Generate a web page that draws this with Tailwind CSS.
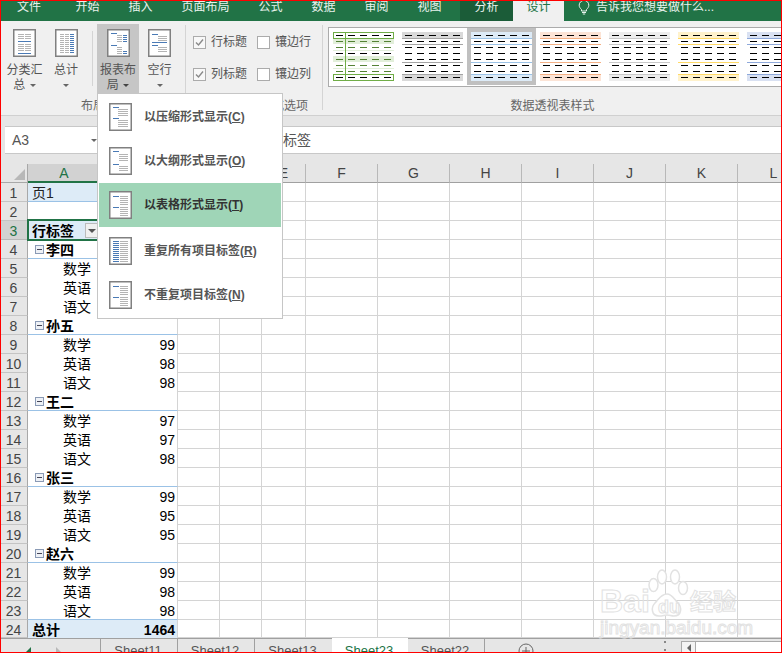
<!DOCTYPE html>
<html lang="zh-CN">
<head>
    <meta charset="UTF-8">
    <title>数据透视表 - Excel</title>
    <script src="https://cdn.jsdelivr.net/npm/@tailwindcss/browser@4"></script>
</head>
<body class="bg-white">
<div class="relative w-[782px] h-[653px] overflow-hidden bg-white text-[12px] text-[#555] [font-family:'Liberation_Sans','Noto_Sans_CJK_SC',sans-serif]">

    <!-- 标题栏 / 选项卡 -->
    <div class="flex h-[21px] bg-[#217346] text-[#e8f2ec] leading-[14px]">
        <div class="w-[56px] ml-[1px] text-center">文件</div>
        <div class="w-[53px] ml-[4px] text-center">开始</div>
        <div class="w-[53px] text-center">插入</div>
        <div class="w-[77px] text-center">页面布局</div>
        <div class="w-[53px] text-center">公式</div>
        <div class="w-[53px] text-center">数据</div>
        <div class="w-[53px] text-center">审阅</div>
        <div class="w-[53px] text-center">视图</div>
        <div class="w-[53px] ml-[4px] text-center bg-[#1b5c38]">分析</div>
        <div class="w-[51px] text-center bg-[#f0f0f0] text-[#217346]">设计</div>
        <div class="flex items-start ml-[14px]">
            <svg width="12" height="15" viewBox="0 0 12 15" fill="none" stroke="#e8f2ec"><path d="M3.5 9.5C2 8 1.2 7 1.2 5.2a4.8 4.8 0 0 1 9.6 0c0 1.8-.8 2.8-2.3 4.3v1.5h-5zM4 12.5h4M4.8 14h2.4"/></svg>
            <span class="ml-[6px]">告诉我您想要做什么...</span>
        </div>
    </div>

    <!-- 功能区 -->
    <div class="flex h-[95px] bg-[#f0f0f0] border-b border-[#d0d0d0]">
        <!-- 布局 -->
        <div class="flex flex-col w-[184px] ml-[1px] shrink-0">
            <div class="flex h-[69px] mt-[3px]">
                <div class="flex flex-col items-center w-[39px] ml-[4px] pt-[5px] leading-[15px] text-center">
                    <span data-icon="subtotal"></span>
                    <span class="mt-[6px]">分类汇</span>
                    <span>总 <i class="inline-block align-middle ml-[1px] border-x-[3px] border-t-[3px] border-x-transparent border-t-[#666]"></i></span>
                </div>
                <div class="flex flex-col items-center w-[36px] ml-[4px] pt-[5px] leading-[15px] text-center">
                    <span data-icon="total"></span>
                    <span class="mt-[6px]">总计</span>
                    <i class="mt-[6px] border-x-[3px] border-t-[3px] border-x-transparent border-t-[#666]"></i>
                </div>
                <div class="w-px h-[55px] mt-[7px] ml-[8px] bg-[#d4d4d4]"></div>
                <div class="flex flex-col items-center w-[42px] ml-[4px] pt-[5px] leading-[15px] text-center bg-[#c6c6c6]">
                    <span data-icon="layout"></span>
                    <span class="mt-[6px]">报表布</span>
                    <span>局 <i class="inline-block align-middle ml-[1px] border-x-[3px] border-t-[3px] border-x-transparent border-t-[#444]"></i></span>
                </div>
                <div class="flex flex-col items-center w-[41px] pt-[5px] leading-[15px] text-center">
                    <span data-icon="blank"></span>
                    <span class="mt-[6px]">空行</span>
                    <i class="mt-[6px] border-x-[3px] border-t-[3px] border-x-transparent border-t-[#666]"></i>
                </div>
            </div>
            <div class="mt-[5px] leading-[16px] text-center text-[#666]">布局</div>
        </div>
        <div class="w-px h-[85px] mt-[4px] bg-[#d4d4d4]"></div>

        <!-- 数据透视表样式选项 -->
        <div class="flex flex-col w-[136px] shrink-0">
            <div class="grid grid-cols-[64px_64px] content-start gap-y-[13px] h-[69px] mt-[3px] pl-[7px] pt-[9px] leading-[19px]">
                <div class="flex items-center">
                    <span class="flex items-center justify-center w-[13px] h-[13px] border border-[#ababab] bg-[#f8f8f8]">
                        <svg width="11" height="11" viewBox="0 0 11 11" fill="none" stroke="#8a8a8a" stroke-width="1.4"><path d="M2 5.5l2.5 2.5L9 2.5"/></svg>
                    </span>
                    <span class="ml-[5px] whitespace-nowrap">行标题</span>
                </div>
                <div class="flex items-center">
                    <span class="w-[13px] h-[13px] border border-[#ababab] bg-white"></span>
                    <span class="ml-[5px] whitespace-nowrap">镶边行</span>
                </div>
                <div class="flex items-center">
                    <span class="flex items-center justify-center w-[13px] h-[13px] border border-[#ababab] bg-[#f8f8f8]">
                        <svg width="11" height="11" viewBox="0 0 11 11" fill="none" stroke="#8a8a8a" stroke-width="1.4"><path d="M2 5.5l2.5 2.5L9 2.5"/></svg>
                    </span>
                    <span class="ml-[5px] whitespace-nowrap">列标题</span>
                </div>
                <div class="flex items-center">
                    <span class="w-[13px] h-[13px] border border-[#ababab] bg-white"></span>
                    <span class="ml-[5px] whitespace-nowrap">镶边列</span>
                </div>
            </div>
            <div class="mt-[5px] leading-[16px] text-center text-[#666]">数据透视表样式选项</div>
        </div>
        <div class="w-px h-[85px] mt-[4px] bg-[#d4d4d4]"></div>

        <!-- 数据透视表样式 -->
        <div class="flex flex-col flex-1 min-w-0">
            <div id="gallery" class="flex h-[60px] mt-[6px] ml-[5px] border-y border-l border-[#ababab] bg-white overflow-hidden"></div>
            <div class="mt-[11px] leading-[16px] text-center text-[#666]">数据透视表样式</div>
        </div>
    </div>

    <!-- 编辑栏 -->
    <div class="h-[38px] pt-[10px] bg-[#e6e6e6]">
        <div class="flex h-[28px] ml-[5px] border-y border-[#c8c8c8] bg-white">
            <div class="flex items-center justify-between w-[95px] pl-[7px] pr-[3px] text-[14px]">
                <span>A3</span>
                <i class="border-x-[3px] border-t-[3px] border-x-transparent border-t-[#666]"></i>
            </div>
            <div class="ml-[169px] text-[14px] leading-[26px]">行标签</div>
        </div>
    </div>
    <div class="h-[10px] bg-[#e6e6e6]"></div>

    <!-- 表格 -->
    <div id="sheet" class="relative"></div>

    <!-- 工作表标签 -->
    <div class="flex h-[15px] bg-[#e6e6e6] border-t border-[#a0a0a0] text-[13px] leading-[15px] overflow-visible">
        <div class="relative w-[101px] border-r border-[#a0a0a0]">
            <i class="absolute left-[26px] top-[8px] border-y-[5px] border-r-[5px] border-y-transparent border-r-[#217346]"></i>
            <i class="absolute left-[56px] top-[8px] border-y-[5px] border-l-[5px] border-y-transparent border-l-[#b8b8b8]"></i>
        </div>
        <div class="w-[77px] pt-[4px] pr-[2px] text-center border-r border-[#a0a0a0]">Sheet11</div>
        <div class="w-[77px] pt-[4px] pr-[2px] text-center border-r border-[#a0a0a0]">Sheet12</div>
        <div class="w-[77px] pt-[4px] pr-[2px] text-center">Sheet13</div>
        <div class="w-[76px] -mt-px pt-[5px] pr-[2px] text-center bg-white text-[#217346]">Sheet23</div>
        <div class="w-[77px] pt-[4px] pr-[2px] text-center border-r border-[#a0a0a0]">Sheet22</div>
        <svg class="ml-[33px] mt-[4px]" width="16" height="16" viewBox="0 0 16 16" fill="none" stroke="#666"><circle cx="8" cy="8" r="7"/><path d="M8 4v8M4 8h8"/></svg>
        <div class="ml-[130px] mt-[2px] w-[2px] h-[10px] border-y-[2px] border-[#888]"></div>
        <div class="ml-[15px] mt-[2px] flex items-center justify-center w-[15px] h-[14px] border border-[#aaa] bg-[#f4f4f4]">
            <i class="border-y-[4px] border-r-[4px] border-y-transparent border-r-[#666]"></i>
        </div>
        <div class="flex-1 mt-[2px] bg-white border-t border-[#aaa]"></div>
    </div>

    <!-- 报表布局下拉菜单 -->
    <div class="absolute left-[97px] top-[93px] w-[186px] h-[226px] pt-px px-px bg-white border border-[#c6c6c6] font-bold">
        <div class="flex items-center h-[44px] pl-[10px]">
            <span data-icon="compact"></span>
            <span class="ml-[12px]">以压缩形式显示(<u>C</u>)</span>
        </div>
        <div class="flex items-center h-[44px] pl-[10px]">
            <span data-icon="outline"></span>
            <span class="ml-[12px]">以大纲形式显示(<u>O</u>)</span>
        </div>
        <div class="flex items-center h-[44px] pl-[10px] bg-[#9fd5b7] text-[#333]">
            <span data-icon="tabular"></span>
            <span class="ml-[12px]">以表格形式显示(<u>T</u>)</span>
        </div>
        <div class="flex items-center h-[44px] mt-[2px] pl-[10px]">
            <span data-icon="repeat"></span>
            <span class="ml-[12px]">重复所有项目标签(<u>R</u>)</span>
        </div>
        <div class="flex items-center h-[44px] pl-[10px]">
            <span data-icon="norepeat"></span>
            <span class="ml-[12px]">不重复项目标签(<u>N</u>)</span>
        </div>
    </div>

    <!-- 水印 -->
    <div class="absolute left-[598px] top-[568px] w-[145px] h-[70px] text-transparent [-webkit-text-stroke:1px_#e2e2e2]">
        <svg class="absolute left-[50px] top-0" width="42" height="52" viewBox="0 0 42 52" fill="white" stroke="#e2e2e2" stroke-width="1.5">
            <ellipse cx="5.5" cy="17" rx="4.5" ry="6.5"/><ellipse cx="14" cy="9" rx="4.5" ry="7"/><ellipse cx="27" cy="9" rx="4.5" ry="7"/><ellipse cx="35" cy="20" rx="4.5" ry="6.5"/>
            <path d="M19 26c5 0 7 5 11 9 4 4 4 13-4 13-3 0-4-1-7-1s-4 1-8 1c-8 0-8-9-4-13 4-4 6-9 12-9z"/>
        </svg>
        <span class="absolute left-[2px] top-[15px] text-[32px] leading-[36px] font-bold">Bai</span>
        <span class="absolute left-[60px] top-[29px] text-[18px] leading-[20px] font-bold">du</span>
        <span class="absolute left-[92px] top-[20px] text-[23px] leading-[28px] font-bold whitespace-nowrap">经验</span>
        <span class="absolute left-[2px] top-[50px] text-[19px] leading-[20px] whitespace-nowrap">jingyan.baidu.com</span>
    </div>

    <!-- 截图红框 -->
    <div class="absolute inset-0 border border-[#f00] pointer-events-none"></div>
</div>

<script>
    // 小图标: [x1, x2, y, 颜色]
    const B = '#4a7ab5', G = '#b4b4b4';
    function rows(list, x1, x2, c) { return list.map(y => [x1, x2, y, c]); }
    const icons = {
        subtotal: [...rows([5,7,9], 5,11,G), ...rows([5,7,9], 12,18,G), [5,18,12,B], ...rows([15,17,19,21], 5,11,G), ...rows([15,17,19,21], 12,18,G), [5,18,24,B]],
        total: [...rows([5,7,9,11,13,15,17,19,21,23], 5,9,G), ...rows([5,7,9,11,13,15,17,19,21,23], 10,14,G), ...rows([5,7,9,11,13,15,17,19,21,23], 15,19,B)],
        layout: [[4,10,4,B], ...rows([6,8,10,12], 10,15,G), ...rows([6,8,10,12], 16,20,B), [4,10,16,B], ...rows([18,20,22,24], 10,15,G), ...rows([22,24], 16,20,B)],
        blank: [[4,10,5,B], ...rows([7,9,11], 10,19,G), [4,19,13,B], [4,10,16,B], ...rows([18,20,22], 10,19,G)],
        compact: [[4,10,4,B], ...rows([6,8,10,12], 9,19,G), [4,10,15,B], ...rows([17,19,21,23], 9,19,G)],
        outline: [[4,10,4,B], ...rows([7,9,11,13], 10,19,G), [4,10,17,B], ...rows([19,21,23], 10,19,G)],
        tabular: [[4,10,5,B], ...rows([5,7,9,11,13], 11,19,G), [4,10,16,B], ...rows([16,18,20,22,24], 11,19,G)],
        repeat: rows([4,6,8,10,12,14,16,18,20,22,24], 4,10,B).concat(rows([4,6,8,10,12,14,16,18,20,22,24], 11,19,G)),
        norepeat: [[4,10,5,B], ...rows([5,7,9,11,13], 11,19,G), [4,10,16,B], ...rows([16,18,20,22,24], 11,19,G)]
    };
    document.querySelectorAll('[data-icon]').forEach(el => {
        const lines = icons[el.dataset.icon].map(l => `<rect x="${l[0]}" y="${l[2]}" width="${l[1] - l[0]}" height="1" fill="${l[3]}"/>`).join('');
        el.className = 'block shrink-0';
        el.innerHTML = `<svg class="block" width="23" height="28" viewBox="0 0 23 28"><rect x=".75" y=".75" width="21.5" height="26.5" fill="#fff" stroke="#808080" stroke-width="1.5"/>${lines}</svg>`;
    });

    // 样式库
    function dashes(color, fn) {
        let s = '';
        [3, 9, 15, 21, 27, 33, 39, 45].forEach(y => [3, 15, 27, 39, 51].forEach(x => {
            s += `<rect x="${x}" y="${y}" width="7" height="1" fill="${fn ? fn(y) : color}"/>`;
        }));
        return s;
    }
    function banded(band, line) {
        return `<rect width="61" height="6" fill="${band}"/><rect y="42" width="61" height="7" fill="${band}"/>` +
            [6, 12, 30, 42].map(y => `<rect y="${y}" width="61" height="1" fill="${line}"/>`).join('') + dashes('#000');
    }
    const first = `<rect y="6" width="61" height="6" fill="#e2efda"/><rect y="24" width="61" height="6" fill="#e2efda"/>
        <rect y="18" width="61" height="1" fill="#e2efda"/><rect y="36" width="61" height="1" fill="#e2efda"/>` +
        dashes('', y => (y === 3 || y === 45 || y === 21 ? '#000' : '#548235')) +
        `<rect x=".5" y=".5" width="60" height="6" fill="none" stroke="#70ad47"/><rect x=".5" y="42.5" width="60" height="6" fill="none" stroke="#70ad47"/><rect x="12" width="1" height="49" fill="#70ad47"/>`;
    const styles = [first, banded('#d9d9d9', '#a5a5a5'), banded('#ddebf7', '#9bc2e6'), banded('#fce4d6', '#f4b084'),
        banded('#ededed', '#c9c9c9'), banded('#fff2cc', '#ffd966'), banded('#d9e1f2', '#8ea9db')];
    document.getElementById('gallery').innerHTML = styles.map((s, i) =>
        `<div class="${i === 2 ? 'w-[69px] h-[57px] shrink-0 pl-[4px] pt-[4px] bg-[#c0c0c0]' : 'w-[69px] h-[57px] shrink-0 pl-[4px] pt-[4px]'}"><svg class="block bg-white" width="61" height="49" viewBox="0 0 61 49">${s}</svg></div>`
    ).join('');

    // 表格 (B、C、D 列标被菜单盖住)
    const colW = [72, 78, 42, 42, 44, 72, 72, 72, 72, 72, 72, 72];
    const colN = ['A', '', '', '', 'E', 'F', 'G', 'H', 'I', 'J', 'K', 'L'];
    let html = '<div class="flex h-[19px]"><div class="relative w-[28px] shrink-0 bg-[#e6e6e6] border-r border-b border-[#a8a8a8]"><i class="absolute right-[2px] bottom-[2px] border-l-[11px] border-b-[11px] border-l-transparent border-b-[#b8b8b8]"></i></div>';
    colN.forEach((c, i) => {
        const cls = i === 0
            ? 'shrink-0 text-center text-[14px] leading-[19px] bg-[#d2d2d2] text-[#217346] border-b-2 border-[#217346]'
            : 'shrink-0 text-center text-[14px] leading-[19px] bg-[#e6e6e6] text-[#444] border-r border-b border-r-[#b8b8b8] border-b-[#a0a0a0]';
        html += `<div class="${cls}" style="width:${colW[i]}px">${c}</div>`;
    });
    html += '</div>';

    const data = {
        1: ['page', '页1'], 2: ['blank'], 3: ['head', '行标签'],
        4: ['group', '李四'], 5: ['item', '数学'], 6: ['item', '英语'], 7: ['item', '语文'],
        8: ['group', '孙五'], 9: ['item', '数学', 99], 10: ['item', '英语', 98], 11: ['item', '语文', 98],
        12: ['group', '王二'], 13: ['item', '数学', 97], 14: ['item', '英语', 97], 15: ['item', '语文', 98],
        16: ['group', '张三'], 17: ['item', '数学', 99], 18: ['item', '英语', 95], 19: ['item', '语文', 95],
        20: ['group', '赵六'], 21: ['item', '数学', 99], 22: ['item', '英语', 98], 23: ['item', '语文', 98],
        24: ['total', '总计', 1464]
    };
    const minus = '<span class="flex items-center justify-center w-[9px] h-[9px] mr-[2px] border border-[#8a9ab5] bg-[#eef1f6]"><i class="w-[5px] h-px bg-[#445]"></i></span>';
    for (let r = 1; r <= 24; r++) {
        const [type, label, val] = data[r];
        const rowH = r === 24 ? 'flex h-[18px]' : 'flex h-[19px]';
        html += `<div class="${rowH}"><div class="${r === 3
            ? 'w-[28px] shrink-0 text-center text-[14px] leading-[20px] bg-[#d2d2d2] text-[#217346] border-r border-b border-r-[#a8a8a8] border-b-[#b8b8b8]'
            : 'w-[28px] shrink-0 text-center text-[14px] leading-[20px] bg-[#e6e6e6] text-[#444] border-r border-b border-r-[#a8a8a8] border-b-[#c4c4c4]'}">${r}</div>`;

        // A + B 两列
        let a = 'w-[72px] shrink-0 pl-[4px] text-[14px] leading-[20px] text-black', b = 'w-[78px] shrink-0 pr-[2px] text-right text-[14px] leading-[20px] text-black border-r border-r-[#d4d4d4]', inner = label || '', extra = '';
        if (type === 'page') { a = 'w-[72px] shrink-0 pl-[4px] text-[14px] leading-[20px] text-[#222] bg-[#ddebf7] border-b border-[#9bc2e6]'; b = 'w-[78px] shrink-0 bg-[#ddebf7] border-b border-r border-b-[#9bc2e6] border-r-[#d4d4d4]'; }
        if (type === 'head') {
            a = 'relative w-[72px] shrink-0 pl-[4px] text-[14px] leading-[20px] font-bold text-black bg-[#ddebf7] border-b border-[#9bc2e6]';
            b = 'w-[78px] shrink-0 bg-[#ddebf7] border-b border-r border-b-[#9bc2e6] border-r-[#d4d4d4]';
            extra = '<span class="absolute left-[57px] top-[2px] flex items-center justify-center w-[14px] h-[15px] bg-[#f0f0f0] border border-[#bbb]"><i class="border-x-[4px] border-t-[4px] border-x-transparent border-t-[#555]"></i></span><span class="absolute -left-px -top-[2px] w-[74px] h-[22px] border-2 border-[#217346]"></span>';
        }
        if (type === 'group') {
            a = 'flex items-center w-[72px] shrink-0 pl-[7px] pt-px text-[14px] leading-[18px] font-bold text-black border-b border-[#9bc2e6]';
            b = 'w-[78px] shrink-0 border-b border-r border-b-[#9bc2e6] border-r-[#d4d4d4]';
            inner = minus + label;
        }
        if (type === 'item') {
            a = r === 23 ? 'w-[72px] shrink-0 pl-[35px] text-[14px] leading-[20px] text-black border-b border-[#9bc2e6]' : 'w-[72px] shrink-0 pl-[35px] text-[14px] leading-[20px] text-black';
            if (r === 23) b = 'w-[78px] shrink-0 pr-[2px] text-right text-[14px] leading-[20px] text-black border-b border-r border-b-[#9bc2e6] border-r-[#d4d4d4]';
        }
        if (type === 'total') {
            a = 'w-[72px] shrink-0 pl-[4px] text-[14px] leading-[20px] font-bold text-black bg-[#ddebf7]';
            b = 'w-[78px] shrink-0 pr-[2px] text-right text-[14px] leading-[20px] font-bold text-black bg-[#ddebf7] border-r border-r-[#d4d4d4]';
        }
        html += `<div class="${a}">${inner}${extra}</div><div class="${b}">${val || ''}</div>`;

        for (let c = 2; c < 12; c++) {
            html += `<div class="shrink-0 border-r border-b border-[#d4d4d4]" style="width:${colW[c]}px"></div>`;
        }
        html += '</div>';
    }
    document.getElementById('sheet').innerHTML = html;
</script>
</body>
</html>
